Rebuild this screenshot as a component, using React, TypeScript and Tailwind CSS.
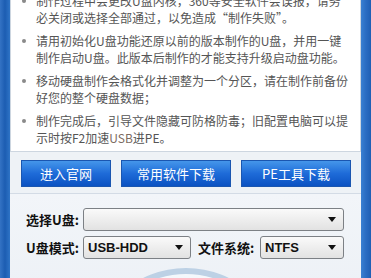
import React from 'react';

const cjk = { fontFamily: '"Noto Sans CJK SC", "Noto Sans", sans-serif' };
const latin = { fontFamily: '"Liberation Sans", "Noto Sans CJK SC", sans-serif' };

const tips: React.ReactNode[] = [
    <>制作过程中会更改U盘内核，360等安全软件会误报，请务<br />必关闭或选择全部通过，以免造成“制作失败”。</>,
    <>请用初始化U盘功能还原以前的版本制作的U盘，并用一键<br />制作启动U盘。此版本后制作的才能支持升级启动盘功能。</>,
    <>移动硬盘制作会格式化并调整为一个分区，请在制作前备份<br />好您的整个硬盘数据；</>,
    <>制作完成后，引导文件隐藏可防格防毒；旧配置电脑可以提<br />示时按F2加速<span className="text-[#7d6b62]">USB</span>进PE。</>,
];

const Arrow = () => (
    <svg width="8" height="5" viewBox="0 0 8 5" className="shrink-0">
        <path d="M0 0 H8 L4 5 Z" fill="#111" />
    </svg>
);

const Select = ({ value, className }: { value?: string; className: string }) => (
    <div className={`${className} h-[23px] flex items-center justify-between pl-[4px] pr-[7px] rounded-[3px] border border-[#7c8085] bg-gradient-to-b from-[#fafafa] to-[#e2e2e2]`}>
        <span className="text-[13px] font-bold text-[#111] leading-none" style={latin}>{value}</span>
        <Arrow />
    </div>
);

const App = () => {
    return (
        <div className="flex h-[278px] w-[371px] overflow-hidden" style={cjk}>
            <div className="w-[10px] shrink-0 bg-gradient-to-r from-[#3473c4] via-[#1c5db2] to-[#2f74c6]" />

            <div className="flex-1 flex flex-col bg-[#eef2f6]">
                <div className="h-[152px] shrink-0 overflow-hidden bg-white border-x border-b border-[#cdd6e0]">
                    <ul className="-mt-[8px] flex flex-col gap-[6px] text-[12px] leading-[17px] text-[#555]">
                        {tips.map((tip, i) => (
                            <li key={i} className="flex">
                                <span className="w-[25px] shrink-0">
                                    <span className="block ml-[11px] mt-[7px] w-[4px] h-[4px] rounded-full bg-[#8a8a8a]" />
                                </span>
                                <span className="whitespace-nowrap">{tip}</span>
                            </li>
                        ))}
                    </ul>
                </div>

                <div className="mt-[8px] flex gap-[10px] pl-[11px] pr-[10px]">
                    {['进入官网', '常用软件下载', 'PE工具下载'].map((label, i) => (
                        <div
                            key={label}
                            className={`${i === 0 ? 'w-[90px]' : 'w-[110px]'} h-[27px] flex items-center justify-center text-[13px] text-white bg-gradient-to-b from-[#4596ea] via-[#1e6bd8] to-[#0b52c2] border border-[#1a56b0]`}
                        >
                            {label}
                        </div>
                    ))}
                </div>

                <div className="mt-[6px] flex-1 flex flex-col border-t border-[#d3dbe5] bg-gradient-to-b from-[#f2f5f9] to-[#e4eaf1] pt-[14px]">
                    <div className="flex items-center pl-[16px]">
                        <span className="w-[57px] text-[13px] font-bold text-[#111]">选择U盘:</span>
                        <Select className="w-[261px]" />
                    </div>
                    <div className="mt-[5px] flex items-center pl-[16px]">
                        <span className="w-[57px] text-[13px] font-bold text-[#111]">U盘模式:</span>
                        <Select className="w-[108px]" value="USB-HDD" />
                        <span className="ml-[7px] w-[62px] text-[13px] font-bold text-[#111]">文件系统:</span>
                        <Select className="w-[84px]" value="NTFS" />
                    </div>
                    <div className="mt-[9px] mx-auto w-[194px] h-[194px] shrink-0 rounded-full border-[6px] border-[#bdd1e5] bg-gradient-to-b from-[#f4f8fc] to-[#d6e4f2]" />
                </div>
            </div>

            <div className="w-[10px] shrink-0 bg-gradient-to-r from-[#3a80d2] via-[#2a6cc2] to-[#1f5fb4]" />
        </div>
    );
};

export default App;
